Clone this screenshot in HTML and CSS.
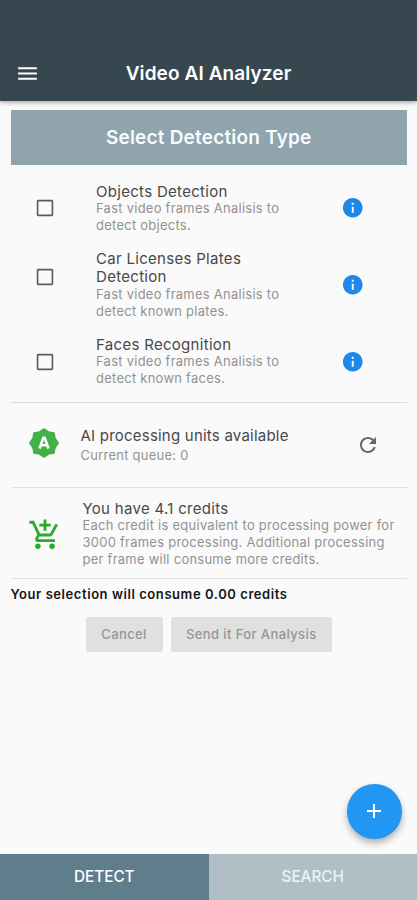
FILE: index.html
```html
<!DOCTYPE html>
<html lang="en">
<head>
<meta charset="utf-8">
<title>Video AI Analyzer</title>
<link rel="stylesheet" href="styles.css">
</head>
<body>
<svg class="defs" width="0" height="0">
  <symbol id="box" viewBox="0 0 24 24"><path d="M19.200 4.800v14.400H4.800V4.800h14.400m0-1.800H4.800C3.700 3 3 3.700 3 4.800v14.400C3 20.300 3.700 21 4.800 21h14.400c1.100 0 1.800-.7 1.800-1.800V4.800C21 3.700 20.300 3 19.200 3z"/></symbol>
  <symbol id="info" viewBox="0 0 24 24"><path d="M12 2C6.480 2 2 6.480 2 12s4.480 10 10 10 10-4.480 10-10S17.520 2 12 2zm1 15h-2v-6h2v6zm0-8h-2V7h2v2z"/></symbol>
</svg>
<header class="appbar">
  <svg class="menu" viewBox="0 0 24 24"><path d="M3 18h18v-2H3v2zm0-5h18v-2H3v2zm0-7v2h18V6H3z"/></svg>
  <h1 class="title">Video AI Analyzer</h1>
</header>
<main class="content">
  <h2 class="banner">Select Detection Type</h2>
  <section class="options">
    <div class="option">
      <svg class="check"><use href="#box"/></svg>
      <div class="text"><div class="name">Objects Detection</div><div class="desc">Fast video frames Analisis to<br>detect objects.</div></div>
      <svg class="info"><use href="#info"/></svg>
    </div>
    <div class="option tall">
      <svg class="check"><use href="#box"/></svg>
      <div class="text"><div class="name">Car Licenses Plates<br>Detection</div><div class="desc">Fast video frames Analisis to<br>detect known plates.</div></div>
      <svg class="info"><use href="#info"/></svg>
    </div>
    <div class="option">
      <svg class="check"><use href="#box"/></svg>
      <div class="text"><div class="name">Faces Recognition</div><div class="desc">Fast video frames Analisis to<br>detect known faces.</div></div>
      <svg class="info"><use href="#info"/></svg>
    </div>
  </section>
  <section class="units">
    <svg class="badge" viewBox="0 0 32 32"><path d="M16 1.800l4.500 3.100 5.500 1.100 1.100 5.500L30.200 16l-3.100 4.500L26 26l-5.500 1.100L16 30.200l-4.500-3.100L6 26l-1.100-5.500L1.800 16l3.100-4.500L6 6l5.500-1.100z"/><path class="letter" d="M11.500 21.500L15.400 10.800h1.200l3.900 10.700M12.800 18.200h6.400"/></svg>
    <div class="text"><div class="name">AI processing units available</div><div class="desc">Current queue: 0</div></div>
    <svg class="refresh" viewBox="0 0 24 24"><path d="M17.650 6.350C16.200 4.900 14.210 4 12 4c-4.420 0-7.990 3.580-7.990 8s3.570 8 7.990 8c3.730 0 6.840-2.550 7.730-6h-2.080c-.82 2.330-3.040 4-5.650 4-3.310 0-6-2.690-6-6s2.690-6 6-6c1.660 0 3.140.69 4.220 1.780L13 11h7V4l-2.350 2.350z"/></svg>
  </section>
  <section class="credits">
    <svg class="cart" viewBox="0 0 24 24"><path d="M11 9h2V6h3V4h-3V1h-2v3H8v2h3v3zm-4 9c-1.100 0-1.990.9-1.990 2S5.900 22 7 22s2-.9 2-2-.9-2-2-2zm10 0c-1.100 0-1.990.9-1.990 2s.89 2 1.990 2 2-.9 2-2-.9-2-2-2zm-9.830-3.250l.03-.12.9-1.630h7.450c.75 0 1.410-.41 1.750-1.030l3.860-7.010L19.420 4h-.01l-1.100 2-2.760 5H8.530l-.13-.27L6.160 6l-.95-2-.94-2H1v2h2l3.600 7.590-1.350 2.450c-.16.28-.25.61-.25.96 0 1.100.9 2 2 2h12v-2H7.420c-.13 0-.25-.11-.25-.25z"/></svg>
    <div class="text"><div class="name">You have 4.1 credits</div><div class="desc">Each credit is equivalent to processing power for<br>3000 frames processing. Additional processing<br>per frame will consume more credits.</div></div>
  </section>
  <p class="summary">Your selection will consume 0.00 credits</p>
  <div class="actions">
    <button class="btn cancel">Cancel</button>
    <button class="btn send">Send it For Analysis</button>
  </div>
</main>
<button class="fab" aria-label="Add"><svg viewBox="0 0 24 24"><path d="M19 13h-6v6h-2v-6H5v-2h6V5h2v6h6v2z"/></svg></button>
<nav class="tabs"><div class="tab active">DETECT</div><div class="tab">SEARCH</div></nav>
</body>
</html>
```

FILE: styles.css
```css
* { box-sizing: border-box; }
body {
  margin: 0;
  height: 900px;
  display: flex;
  flex-direction: column;
  position: relative;
  overflow: hidden;
  background: #fafafa;
  color: #484848;
  font-family: Inter, "Liberation Sans", sans-serif;
}
.defs { position: absolute; }
svg { display: block; flex: none; }
h1, h2, p { margin: 0; }
.appbar {
  height: 100.5px;
  padding: 47px 15px 0 15px;
  display: grid;
  grid-template-columns: 24px 1fr 24px;
  align-items: center;
  background: #37474f;
  box-shadow: 0 1px 5px rgba(0, 0, 0, .4);
}
.menu { width: 25px; height: 25px; fill: #fff; }
.title {
  text-align: center;
  color: #fff;
  font-size: 19px;
  font-weight: 600;
  letter-spacing: .1px;
  white-space: nowrap;
}
.content { flex: 1; padding: 9.500px 10px 0 10.500px; }
.banner {
  height: 54.5px;
  line-height: 56px;
  text-align: center;
  background: #90a4ae;
  color: #f8fcff;
  font-size: 19px;
  font-weight: 600;
  letter-spacing: .2px;
}
.options {
  height: 238px;
  padding: 18px 0 0 23.500px;
  display: flex;
  flex-direction: column;
  gap: 15.500px;
  border-bottom: 1.500px solid #d9dcdd;
}
.option { display: grid; grid-template-columns: 62px 1fr 74px; align-items: center; }
.tall .check { margin-bottom: 16px; }
.check { width: 22px; height: 22px; fill: #5c5c5c; }
.info { width: 23.500px; height: 23.500px; fill: #1e88e9; margin: 0 0 1px 8px; }
.text { white-space: nowrap; }
.name { font-size: 15px; line-height: 18.500px; letter-spacing: .3px; }
.desc { font-size: 12.900px; line-height: 16.700px; letter-spacing: .3px; color: #929292; }
.units {
  height: 85.500px;
  padding: 0 27px 4px 17px;
  display: grid;
  grid-template-columns: 53px 1fr 24px;
  align-items: center;
  border-bottom: 1.500px solid #e0e1e2;
}
.units .text { padding-top: 4px; }
.units .name { line-height: 21px; letter-spacing: .22px; }
.units .desc { line-height: 19px; }
.badge { width: 32px; height: 32px; fill: #43b048; stroke: #43b048; stroke-width: 1.400; stroke-linejoin: round; }
.badge .letter { fill: none; stroke: #fff; stroke-width: 2.600; stroke-linejoin: miter; }
.refresh { width: 24px; height: 24px; fill: #666; margin: 4px 0 0; }
.credits {
  height: 90.500px;
  padding: 2px 0 0 17px;
  display: grid;
  grid-template-columns: 55px 1fr;
  align-items: center;
  border-bottom: 1.500px solid #e0e1e2;
}
.credits .text { padding-top: 1px; }
.cart { width: 34px; height: 34px; fill: #2aaa2e; margin-top: 2px; }
.summary {
  padding-top: 6px;
  line-height: 18px;
  font-size: 13px;
  font-weight: 600;
  letter-spacing: .57px;
  color: #151515;
}
.actions { display: flex; gap: 8px; margin-top: 14px; padding-left: 75px; }
.btn {
  height: 35px;
  padding: 0;
  border: 0;
  border-radius: 3px;
  background: #e0e0e0;
  color: #969696;
  font: 500 13px Inter, sans-serif;
  letter-spacing: .4px;
  white-space: nowrap;
}
.cancel { width: 77px; }
.send { width: 161.500px; }
.fab {
  position: absolute;
  left: 347px;
  top: 784px;
  width: 54.500px;
  height: 54.500px;
  padding: 0;
  border: 0;
  border-radius: 50%;
  background: #2196f3;
  box-shadow: 0 4px 7px rgba(0, 0, 0, .3);
  display: grid;
  place-items: center;
}
.fab svg { width: 24px; height: 24px; fill: #fff; }
.tabs { height: 46.500px; display: grid; grid-template-columns: 1fr 1fr; }
.tab {
  line-height: 46px;
  text-align: center;
  font-size: 15.300px;
  font-weight: 500;
  color: #edf3f6;
  background: #b0bec5;
}
.active { background: #607d8b; color: #fff; }
```
